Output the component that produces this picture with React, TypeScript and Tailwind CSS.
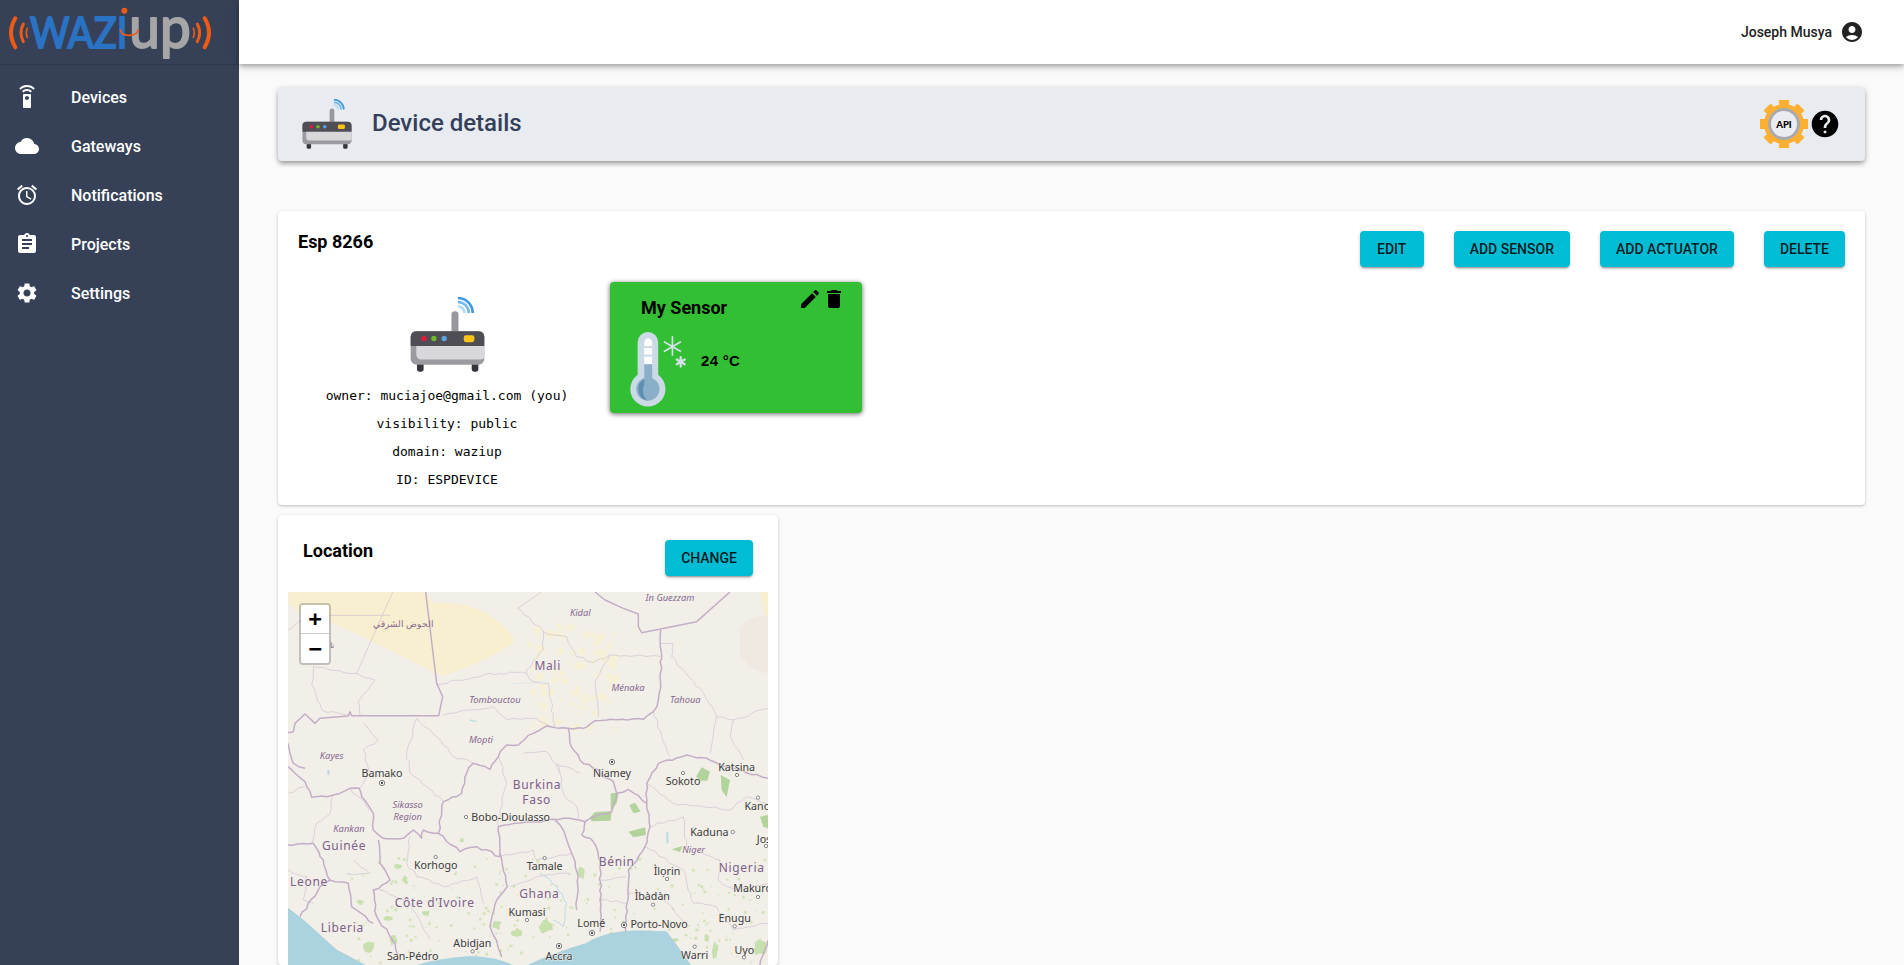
import React from 'react';
import { MdSettingsRemote, MdCloud, MdAccessAlarm, MdAssignment, MdSettings, MdAccountCircle, MdHelp, MdEdit, MdDelete } from 'react-icons/md';

const navItems = [
  { label: 'Devices', icon: MdSettingsRemote },
  { label: 'Gateways', icon: MdCloud },
  { label: 'Notifications', icon: MdAccessAlarm },
  { label: 'Projects', icon: MdAssignment },
  { label: 'Settings', icon: MdSettings },
];

const Logo = () => (
  <svg viewBox="0 0 717 192" className="w-[239px] h-[64px]">
    <g fill="none" stroke="#ef5a14" strokeLinecap="round">
      <path d="M46 55 Q20 98 46 142" strokeWidth="12" />
      <path d="M70 72 Q56 98 70 125" strokeWidth="9" />
      <path d="M82 85 Q76 98 82 112" strokeWidth="5" />
      <path d="M614 55 Q640 98 614 142" strokeWidth="12" />
      <path d="M592 72 Q606 98 592 125" strokeWidth="9" />
      <path d="M580 85 Q586 98 580 112" strokeWidth="5" />
    </g>
    <text x="90" y="144" fill="#2a72c4" stroke="#2a72c4" strokeWidth="6" strokeLinejoin="round" fontSize="130" fontFamily="Lato, sans-serif" fontWeight="400" textLength="292" lengthAdjust="spacingAndGlyphs">WAZI</text>
    <text x="388" y="143" fill="#a6a6a6" stroke="#a6a6a6" strokeWidth="6" strokeLinejoin="round" fontSize="172" fontFamily="Lato, sans-serif" fontWeight="400" textLength="184" lengthAdjust="spacingAndGlyphs">up</text>
    <circle cx="373" cy="32" r="9" fill="#ef5a14" />
    <path d="M361 88 Q362 106 388 106 Q414 106 414 88" fill="none" stroke="#ef5a14" strokeWidth="5" />
  </svg>
);

const Router = ({ size }: { size: number }) => (
  <svg viewBox="360 80 224 226" width={size} height={size}>
    <rect x="380" y="270" width="20" height="35" rx="7" fill="#35353a" />
    <rect x="545" y="270" width="20" height="35" rx="7" fill="#35353a" />
    <rect x="484" y="123" width="21" height="75" rx="10" fill="#98979e" />
    <g fill="none" strokeWidth="8">
      <path d="M503 108 A20 20 0 0 1 523 128" stroke="#b5dbf5" />
      <path d="M503 95 A33 33 0 0 1 536 128" stroke="#74b9ec" />
      <path d="M503 83 A45 45 0 0 1 548 128" stroke="#3f9ae0" />
    </g>
    <rect x="361" y="183" width="222" height="101" rx="18" fill="#9b9aa0" />
    <path d="M378 225 H583 V258 Q583 268 573 268 H392 Q378 268 378 252 Z" fill="#d8d8da" />
    <path d="M361 228 V201 Q361 183 379 183 H565 Q583 183 583 201 V228 Z" fill="#4f4e55" />
    <circle cx="401" cy="205" r="8" fill="#e8173e" />
    <circle cx="431" cy="205" r="8" fill="#6fba2c" />
    <circle cx="462" cy="205" r="8" fill="#5ba4e6" />
    <rect x="521" y="195" width="32" height="21" rx="7" fill="#fcc419" />
  </svg>
);

const ApiGear = () => (
  <svg viewBox="0 0 48 48" width="48" height="48" className="shrink-0">
    {[0, 45, 90, 135].map((a) => (
      <rect key={a} x="19" y="0" width="10" height="48" fill="#fbb034" transform={`rotate(${a} 24 24)`} />
    ))}
    <circle cx="24" cy="24" r="20" fill="#fbb034" />
    <circle cx="24" cy="24" r="16" fill="#a9a9b0" />
    <circle cx="24" cy="24" r="13" fill="#e9ecf1" />
    <text x="24" y="27.5" textAnchor="middle" fontSize="9.5" fontWeight="900" fontFamily="Lato, sans-serif" fill="#000">API</text>
  </svg>
);

const Thermometer = () => (
  <svg viewBox="90 188 172 226" width="57" height="75" className="shrink-0">
    <path d="M113 219 A31 31 0 0 1 175 219 V317 A53 53 0 1 1 113 317 Z" fill="#ccd9e6" />
    <path d="M133 222 A12 15 0 0 1 157 222 V285 H133 Z" fill="#fff" />
    <rect x="133" y="230" width="24" height="6" fill="#ccd9e6" />
    <rect x="133" y="256" width="24" height="6" fill="#ccd9e6" />
    <rect x="133" y="285" width="24" height="60" fill="#8cafc9" />
    <circle cx="144" cy="360" r="35" fill="#8cafc9" />
    <path d="M133 330 A35 35 0 0 0 144 395 A26 35 0 0 1 133 345 Z" fill="#5d8fb0" />
    <g stroke="#d5e0ea" strokeLinecap="round" fill="none">
      <path d="M218 202 V258 M194 218 L242 246 M194 246 L242 218" strokeWidth="5" />
      <path d="M243 264 V292 M231 271 L255 285 M231 285 L255 271" strokeWidth="7" />
    </g>
  </svg>
);

const Btn = ({ children }: { children: React.ReactNode }) => (
  <button className="h-9 min-w-16 px-4 rounded bg-[#00bcd4] text-[14px] font-medium uppercase text-black/87 shadow-[0_3px_1px_-2px_rgba(0,0,0,0.2),0_2px_2px_0_rgba(0,0,0,0.14),0_1px_5px_0_rgba(0,0,0,0.12)]">
    {children}
  </button>
);

// makes a hand drawn looking wobble out of the rough M/L border outlines
const seed = (n: number) => {
  const v = Math.sin(n * 12.9898) * 43758.5453;
  return v - Math.floor(v);
};

const wiggle = (d: string, amp: number) => {
  const pts = d.match(/-?\d+(\.\d+)?/g)!.map(Number);
  let out = `M${pts[0]} ${pts[1]}`;
  for (let i = 2; i < pts.length; i += 2) {
    const [x0, y0, x1, y1] = [pts[i - 2], pts[i - 1], pts[i], pts[i + 1]];
    const steps = Math.max(1, Math.round(Math.hypot(x1 - x0, y1 - y0) / 16));
    for (let s = 1; s <= steps; s++) {
      const t = s / steps;
      const n = s === steps ? 0 : amp;
      const jx = (seed(x0 + s * 7.1 + i) - 0.5) * 2 * n;
      const jy = (seed(y0 + s * 3.3 + i) - 0.5) * 2 * n;
      out += ` L${(x0 + (x1 - x0) * t + jx).toFixed(1)} ${(y0 + (y1 - y0) * t + jy).toFixed(1)}`;
    }
  }
  return out;
};

const blob = (x: number, y: number, rx: number, ry: number) => {
  let out = '';
  for (let i = 0; i < 12; i++) {
    const a = (i / 12) * Math.PI * 2;
    const k = 0.55 + seed(x + y + i * 5.7) * 0.6;
    out += `${i === 0 ? 'M' : 'L'}${(x + Math.cos(a) * rx * k).toFixed(1)} ${(y + Math.sin(a) * ry * k).toFixed(1)} `;
  }
  return out + 'Z';
};

const borders = [
  'M467 246 L500 520 L518 560 L506 617 L245 617 L240 605 L235 618 L150 625 L135 640 L105 612 L75 640 L70 665 L54 668',
  'M975 246 L1005 270 L1060 295 L1105 312 L1105 350 L1115 368 L1280 335 L1380 246',
  'M1172 360 L1172 520 L1165 570 L1150 605 L1120 628 L975 632 L940 655 L895 655 L830 648 L790 670 L745 705 L710 705 L685 740 L660 778 L610 760 L590 790 L575 850 L520 875 L515 900 L505 970 L460 960 L455 985 L430 960 L400 985 L340 985 L310 960 L310 910 L275 860 L268 835 L240 835 L190 855 L125 862 L105 815 L54 770',
  'M54 700 L70 760 L105 775',
  'M895 655 L900 700 L930 750 L970 775 L1030 815 L1040 850 L1025 905 L960 925 L945 935 L880 925 L850 928 L685 950 L690 1040 L620 1010 L570 1025 L505 970',
  'M1040 850 L1075 838 L1130 880 L1130 820 L1165 760 L1250 735 L1310 745 L1370 770 L1494 805',
  'M1130 880 L1140 950 L1125 1010 L1075 1080 L1068 1265',
  'M990 1265 L992 1060 L970 995 L935 975 L945 935',
  'M920 1200 L925 1100 L905 1030 L880 960 L855 930',
  'M690 1030 L712 1130 L680 1170 L660 1250 L695 1340',
  'M325 990 L330 1060 L350 1090 L360 1110 L310 1140 L320 1220 L375 1300 L385 1350',
  'M54 1005 L130 1000 L160 1050 L180 1110 L235 1120 L245 1190 L310 1240',
  'M90 1220 L150 1130 L180 1110',
  'M1494 1290 L1470 1365',
];

// straight desert lines stay straight, the rest gets wobbled
const straightLines = [
  'M368 246 L260 490',
  'M180 316 L360 316',
  'M742 295 L815 246',
];

const adminLines = [
  'M260 490 L130 470 L125 525 L155 600 L240 615',
  'M260 490 L315 510 L265 575 L270 617',
  'M54 360 L95 330',
  'M742 295 L820 365 L820 420 L770 480 L770 490 L660 490 L500 525',
  'M820 365 L890 380 L920 440 L970 458 L1020 435 L1172 440',
  'M1020 435 L975 515 L985 620',
  'M770 490 L790 515 L835 520 L855 648',
  'M520 615 L590 600 L670 590 L710 630 L800 625 L840 648',
  'M440 625 L500 680 L550 740 L610 760',
  'M440 625 L410 730 L420 790 L470 830 L520 875',
  'M280 640 L325 690 L280 720 L300 790 L268 835',
  'M1172 400 L1210 400 L1205 440 L1300 550 L1340 620 L1320 730',
  'M1150 605 L1175 680 L1200 740',
  'M1340 622 L1390 630 L1494 595',
  'M1390 630 L1380 680 L1420 750',
  'M760 730 L830 725 L870 790 L860 760 L930 790',
  'M685 740 L710 820 L690 900 L685 950',
  'M870 790 L880 850 L920 890 L925 925',
  'M190 855 L180 910 L140 940 L125 1000',
  'M240 835 L300 900',
  'M420 980 L410 1060 L440 1100 L520 1130 L620 1100 L640 1180',
  'M690 1040 L790 1020 L800 1050 L905 1030',
  'M720 1130 L800 1100 L900 1090',
  'M1130 820 L1210 880 L1300 890 L1380 900 L1430 860 L1494 880',
  'M1140 950 L1240 920 L1250 1010 L1350 1050 L1345 1110 L1400 1140 L1494 1120',
  'M1125 1010 L1240 1080 L1270 1180 L1340 1190 L1390 1260 L1494 1240',
  'M1075 1150 L1180 1170 L1250 1240',
  'M990 1110 L1068 1100',
  'M990 1170 L1068 1180',
  'M54 850 L105 830',
  'M54 1080 L110 1100 L100 1170 L130 1180',
  'M330 1140 L420 1180 L480 1290',
  'M250 1050 L300 1090 L230 1090',
];

const forests = [
  'M1022 850 L1046 848 L1040 880 L1022 902 Z',
  'M960 922 L975 906 L1025 904 L1022 932 L965 934 Z',
  'M1078 885 L1095 878 L1112 905 L1090 910 Z',
  'M1075 965 L1125 952 L1128 975 L1090 982 Z',
  'M1278 800 L1295 772 L1320 785 L1312 812 L1290 812 Z',
  'M1352 795 L1380 810 L1370 862 L1355 840 Z',
  'M1205 1018 L1238 1008 L1230 1026 Z',
  'M1470 920 L1494 915 L1494 955 L1480 950 Z',
];

const greenBlobs = [
  [830, 1250, 24, 22], [370, 1290, 12, 18], [295, 1310, 20, 22], [355, 1225, 16, 8], [468, 1210, 14, 10], [1470, 1310, 22, 26],
  [1335, 1320, 10, 28], [1215, 1290, 14, 8], [270, 1175, 12, 8], [385, 1070, 12, 10], [935, 1090, 12, 24], [680, 1245, 14, 16],
  [575, 990, 7, 9], [405, 1110, 10, 14], [1310, 1285, 8, 14], [740, 1270, 18, 16],
];

// speckle in the south and the pale patch north of the river
const southDots = Array.from({ length: 260 }, (_, i) => ({
  x: 230 + seed(i + 0.3) * 1260,
  y: 1040 + seed(i + 0.7) * 320,
  r: 1.5 + seed(i + 0.9) * 4,
}));
const northDots = Array.from({ length: 110 }, (_, i) => ({
  x: 780 + seed(i + 1.3) * 260,
  y: 340 + seed(i + 1.7) * 320,
  r: 4 + seed(i + 1.9) * 9,
}));

const labels: [string, number, number, string][] = [
  ['In Guezzam', 1200, 274, 'r'], ['Kidal', 931, 319, 'r'], ['Ménaka', 1074, 544, 'r'], ['Tahoua', 1246, 580, 'r'],
  ['Tombouctou', 675, 578, 'r'], ['Mopti', 633, 699, 'r'], ['Kayes', 185, 748, 'r'], ['Sikasso', 413, 893, 'r'],
  ['Region', 413, 929, 'r'], ['Kankan', 237, 965, 'r'], ['Niger', 1271, 1029, 'r'],
  ['Mali', 833, 481, 'c'], ['Burkina', 801, 836, 'c'], ['Faso', 800, 881, 'c'], ['Guinée', 222, 1020, 'c'], ['Bénin', 1040, 1069, 'c'],
  ['Nigeria', 1415, 1087, 'c'], ['Ghana', 808, 1164, 'c'], ["Côte d'Ivoire", 494, 1192, 'c'], ['Liberia', 217, 1267, 'c'], ['Leone', 117, 1128, 'c'],
  ['Bamako', 336, 800, 't'], ['Niamey', 1026, 800, 't'], ['Sokoto', 1239, 826, 't'], ['Katsina', 1400, 782, 't'],
  ['Bobo-Dioulasso', 722, 933, 't'], ['Kaduna', 1318, 979, 't'], ['Korhogo', 497, 1077, 't'], ['Tamale', 824, 1079, 't'],
  ['Ìlọrin', 1191, 1094, 't'], ['Kumasi', 771, 1218, 't'], ['Ìbàdàn', 1147, 1171, 't'], ['Lomé', 964, 1251, 't'],
  ['Porto-Novo', 1167, 1255, 't'], ['Enugu', 1394, 1236, 't'], ['Abidjan', 607, 1312, 't'], ['Accra', 867, 1350, 't'],
  ['San-Pédro', 428, 1351, 't'], ['Warri', 1274, 1346, 't'], ['Uyo', 1423, 1333, 't'], ['Kano', 1462, 899, 't'], ['Makurdi', 1452, 1147, 't'], ['Jos', 1482, 998, 't'],
];

const towns = [
  [1239, 789], [1401, 795], [1464, 863], [1388, 966], [1488, 1008], [588, 921], [497, 1041], [824, 1044], [1191, 1107],
  [1149, 1184], [771, 1230], [1464, 1161], [1394, 1249], [608, 1324], [1274, 1310], [1422, 1342],
];
const capitals = [[336, 819], [1026, 756], [966, 1269], [1062, 1245], [867, 1308]];

const MapView = () => (
  <svg viewBox="54 246 1440 1119" className="block w-[480px] h-[373px]" fontFamily="'Noto Sans', sans-serif">
    <rect x="54" y="246" width="1440" height="1119" fill="#f2efe9" />
    <path d="M54 246 H468 L492 280 Q620 270 690 340 Q740 380 730 400 Q620 470 515 498 Q400 440 300 390 Q180 330 90 310 L54 280 Z" fill="#f8eed0" />
    <path d="M1470 246 H1494 V340 Q1480 310 1470 246 Z" fill="#f8eed0" />
    <path d="M1410 350 Q1450 310 1494 320 V490 Q1430 480 1410 430 Z" fill="#efe9e1" />
    {northDots.map((d, i) => (
      <circle key={i} cx={d.x} cy={d.y} r={d.r} fill="#f6f0d6" />
    ))}
    {southDots.map((d, i) => (
      <circle key={i} cx={d.x} cy={d.y} r={d.r} fill="#d3e4bb" />
    ))}
    {greenBlobs.map(([x, y, rx, ry], i) => (
      <path key={i} d={blob(x, y, rx, ry)} fill="#c8dfae" />
    ))}
    {forests.map((d) => (
      <path key={d} d={d} fill="#b3d39c" />
    ))}
    <path d="M54 1195 L100 1230 L200 1320 L285 1365 H54 Z" fill="#aad3df" />
    <path d="M440 1365 Q500 1345 600 1338 Q680 1340 730 1365 Z" fill="#aad3df" />
    <path d="M775 1365 Q850 1330 950 1300 Q1000 1265 1100 1262 L1190 1265 L1230 1320 L1262 1365 Z" fill="#aad3df" />
    <g fill="none" stroke="#b9dbe5" strokeWidth="3">
      <path d={wiggle('M810 1090 L860 1130 L890 1180 L880 1250 L850 1230', 4)} />
      <path d="M175 780 V795 M1192 965 V1000" strokeWidth="6" />
      <path d="M600 630 L620 635" strokeWidth="4" />
      <path d="M720 522 L830 515" stroke="#d5e6ea" strokeWidth="2" />
    </g>
    <g fill="none" stroke="#d2c5d2" strokeWidth="2.2">
      {straightLines.map((d) => <path key={d} d={d} />)}
      {adminLines.map((d) => <path key={d} d={wiggle(d, 4)} />)}
    </g>
    <g fill="none" stroke="#c4aec6" strokeWidth="4.5" strokeLinejoin="round">
      {borders.map((d, i) => <path key={d} d={i < 2 ? d : wiggle(d, 3.5)} />)}
    </g>
    <path d="M54 1195 L100 1230 L200 1320 L285 1365 M775 1365 Q850 1330 950 1300 Q1000 1265 1100 1262 L1190 1265 L1230 1320 L1262 1365" fill="none" stroke="#9cc5d3" strokeWidth="1.5" />
    <text x="400" y="352" textAnchor="middle" fontSize="26" fill="#84698f">الحوض الشرقي</text>
    <text x="187" y="415" textAnchor="middle" fontSize="24" fill="#84698f">تا</text>
    {labels.map(([t, x, y, k]) => (
      <text
        key={t}
        x={x}
        y={y}
        textAnchor="middle"
        fontSize={k === 'r' ? 28 : k === 'c' ? 36 : 32}
        fontStyle={k === 'r' ? 'italic' : 'normal'}
        letterSpacing={k === 'c' ? 2 : 0}
        fill={k === 't' ? '#3c3c3c' : k === 'c' ? '#7e6089' : '#85688f'}
        stroke="#f2efe9"
        strokeWidth="3"
        paintOrder="stroke"
      >
        {t}
      </text>
    ))}
    {towns.map(([x, y], i) => (
      <circle key={i} cx={x} cy={y} r="5" fill="#fff" stroke="#555" strokeWidth="2" />
    ))}
    {capitals.map(([x, y], i) => (
      <g key={i}>
        <circle cx={x} cy={y} r="8" fill="#fff" stroke="#444" strokeWidth="2" />
        <circle cx={x} cy={y} r="3.5" fill="#444" />
      </g>
    ))}
  </svg>
);

export default function App() {
  return (
    <div className="flex h-screen overflow-hidden bg-[#fafafa] font-['Roboto',sans-serif]">
      <aside className="w-[239px] shrink-0 bg-[#364158] text-white">
        <div className="h-[65px] border-b border-[#2f394e]">
          <Logo />
        </div>
        <nav className="pt-2">
          {navItems.map((item) => (
            <div key={item.label} className="h-[49px] flex items-center">
              <div className="w-[71px] pl-[15px] shrink-0 -mt-[2px]">
                <item.icon size={24} />
              </div>
              <span className="text-[16px] font-medium">{item.label}</span>
            </div>
          ))}
        </nav>
      </aside>
      <div className="flex-1 min-w-0 flex flex-col">
        <header className="relative h-16 shrink-0 bg-white shadow-[0_2px_4px_-1px_rgba(0,0,0,0.2),0_4px_5px_0_rgba(0,0,0,0.14),0_1px_10px_0_rgba(0,0,0,0.12)] flex items-center justify-end pr-[40px] gap-2 text-[#222]">
          <span className="text-[14px] font-medium">Joseph Musya</span>
          <MdAccountCircle size={24} />
        </header>
        <main className="flex-1 min-h-0 px-[39px] pt-[23px]">
          <div className="h-[74px] bg-[#e8ebf0] rounded-sm shadow-[0_3px_5px_-1px_rgba(0,0,0,0.3),0_2px_6px_0_rgba(0,0,0,0.18)] flex items-center pl-6 pr-6">
            <Router size={50} />
            <h1 className="ml-5 -mt-[2px] text-[24px] font-medium text-[#34405a]">Device details</h1>
            <div className="ml-auto flex items-center">
              <ApiGear />
              <MdHelp size={32} color="#000" className="ml-[1px]" />
            </div>
          </div>

          <section className="mt-[50px] h-[294px] bg-white rounded shadow-[0_1px_3px_rgba(0,0,0,0.25)] px-5 pt-5">
            <div className="flex items-start justify-between h-[51px]">
              <h2 className="text-[18px] font-bold text-black leading-[20px] mt-[1px]">Esp 8266</h2>
              <div className="flex gap-[30px]">
                <Btn>Edit</Btn>
                <Btn>Add sensor</Btn>
                <Btn>Add actuator</Btn>
                <Btn>Delete</Btn>
              </div>
            </div>
            <div className="flex items-start">
              <div className="w-[298px] mr-[14px] flex flex-col items-center pt-[15px]">
                <Router size={75} />
                <div className="mt-[10px] font-['DejaVu_Sans_Mono',monospace] text-[13px] text-black text-center leading-[28px]">
                  <div>owner: muciajoe@gmail.com (you)</div>
                  <div>visibility: public</div>
                  <div>domain: waziup</div>
                  <div>ID: ESPDEVICE</div>
                </div>
              </div>
              <div className="w-[252px] h-[131px] bg-[#33bf33] rounded shadow-[0_1px_5px_rgba(0,0,0,0.6)] pt-[5px] pl-[20px] pr-[16px]">
                <div className="flex items-start justify-between">
                  <h3 className="ml-[11px] mt-[9px] text-[18px] font-bold leading-[24px] text-black">My Sensor</h3>
                  <div className="flex text-black">
                    <MdEdit size={24} />
                    <MdDelete size={24} />
                  </div>
                </div>
                <div className="flex items-center mt-[12px]">
                  <Thermometer />
                  <span className="ml-[14px] -mt-[16px] font-['Liberation_Sans',sans-serif] text-[15px] tracking-[0.3px] font-bold text-black">24 °C</span>
                </div>
              </div>
            </div>
          </section>

          <section className="mt-[10px] w-[500px] bg-white rounded shadow-[0_1px_3px_rgba(0,0,0,0.25)] px-[10px]">
            <div className="flex items-start justify-between h-[77px] pt-[25px] pr-[15px]">
              <h2 className="ml-[15px] -mt-[1px] text-[18px] font-bold leading-[24px] text-black">Location</h2>
              <Btn>Change</Btn>
            </div>
            <div className="relative">
              <MapView />
              <div className="absolute left-[11px] top-[11px] w-[32px] rounded-[4px] border-2 border-black/20 bg-clip-padding overflow-hidden">
                <div className="h-[29px] pb-[2px] bg-white border-b border-[#ccc] flex items-center justify-center text-[22px] font-bold text-black font-['DejaVu_Sans_Mono',monospace]">+</div>
                <div className="h-[29px] bg-white flex items-center justify-center text-[22px] font-bold text-black font-['DejaVu_Sans_Mono',monospace]">−</div>
              </div>
            </div>
          </section>
        </main>
      </div>
    </div>
  );
}
